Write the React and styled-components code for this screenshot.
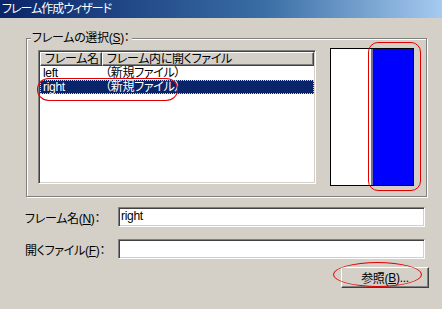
import React from "react"
import styled, { createGlobalStyle } from "styled-components"

const GlobalStyle = createGlobalStyle`
  html, body { margin: 0; padding: 0; background: #d4d0c8; }
  body { font-family: "Noto Sans CJK JP", "DejaVu Sans", sans-serif; }
`

const font = `"Liberation Sans", "Noto Sans CJK JP", sans-serif`

const Window = styled.div`
  position: relative;
  width: 442px;
  height: 309px;
  background: #d4d0c8;
  overflow: hidden;
  font-family: ${font};
  font-size: 12px;
  font-feature-settings: "palt" 1;
  letter-spacing: -0.3px;
  color: #000;
`

const TitleBar = styled.div`
  height: 18px;
  display: flex;
  align-items: center;
  padding-left: 2px;
  background: linear-gradient(to right, #0a246a 0%, #3a6ea5 60%, #a6caf0 100%);
  color: #fff;
  font-size: 12px;
  letter-spacing: -1px;
  line-height: 18px;
`

const Body = styled.div`
  display: flex;
  flex-direction: column;
  padding: 20px 15px 0 25px;
`

const GroupBox = styled.div`
  margin-left: 1px;
  width: 401px;
  height: 159px;
  box-sizing: border-box;
  border: 1px solid #808080;
  box-shadow: inset 1px 1px 0 #fff, 1px 1px 0 #fff;
  display: flex;
  flex-direction: column;
`

const Legend = styled.div`
  align-self: flex-start;
  margin: -9px 0 0 4px;
  padding: 0 2px 0 1px;
  background: #d4d0c8;
  line-height: 16px;
  height: 16px;
`

const GroupInner = styled.div`
  display: flex;
  align-items: flex-start;
  padding: 0 0 0 11px;
  margin-top: 3px;
`

const ListView = styled.div`
  width: 278px;
  height: 134px;
  margin-top: 1px;
  box-sizing: border-box;
  background: #fff;
  border: 1px solid;
  border-color: #808080 #fff #fff #808080;
  box-shadow: inset 1px 1px 0 #404040, inset -1px -1px 0 #d4d0c8;
  padding: 1px;
  display: flex;
  flex-direction: column;
`

const HeaderRow = styled.div`
  display: flex;
  height: 14px;
`

const HeaderCell = styled.div`
  width: ${p => p.w};
  flex: ${p => (p.grow ? 1 : "none")};
  box-sizing: border-box;
  background: #d4d0c8;
  border: 1px solid;
  border-color: #fff #404040 #404040 #fff;
  box-shadow: inset -1px -1px 0 #808080;
  padding-left: 4px;
  line-height: 12px;
  white-space: nowrap;
  overflow: hidden;
`

const Row = styled.div`
  display: flex;
  height: 14px;
  line-height: 14px;
  background: ${p => (p.selected ? "#0a246a" : "transparent")};
  color: ${p => (p.selected ? "#fff" : "#000")};
  outline: ${p => (p.selected ? "1px dotted #d4d0c8" : "none")};
  outline-offset: -1px;
`

const Cell = styled.div`
  width: ${p => p.w};
  padding-left: 3px;
  box-sizing: border-box;
  white-space: nowrap;
`

const Preview = styled.div`
  display: flex;
  width: 84px;
  height: 138px;
  margin-left: 14px;
  margin-top: -1px;
  box-sizing: border-box;
  border: 1px solid #000;
`

const Pane = styled.div`
  flex: 1;
  background: ${p => p.color};
  border-left: ${p => (p.divider ? "2px solid #6f6f9a" : "none")};
`

const FieldRow = styled.div`
  display: flex;
  align-items: center;
  margin-top: ${p => p.mt}px;
`

const Label = styled.div`
  width: 93px;
  white-space: nowrap;
`

const Key = styled.span`
  text-decoration: underline;
`

const TextBox = styled.div`
  width: 307px;
  height: 20px;
  box-sizing: border-box;
  background: #fff;
  border: 1px solid;
  border-color: #808080 #fff #fff #808080;
  box-shadow: inset 1px 1px 0 #404040, inset -1px -1px 0 #d4d0c8;
  padding: 0 2px;
  line-height: 17px;
`

const ButtonRow = styled.div`
  display: flex;
  justify-content: flex-end;
  margin-top: 8px;
`

const Button = styled.div`
  width: 88px;
  height: 21px;
  box-sizing: border-box;
  background: #d4d0c8;
  border: 1px solid;
  border-color: #fff #404040 #404040 #fff;
  box-shadow: inset -1px -1px 0 #808080;
  display: flex;
  align-items: center;
  justify-content: center;
  margin-right: -2px;
`

const Mark = styled.div`
  position: absolute;
  left: ${p => p.x}px;
  top: ${p => p.y}px;
  width: ${p => p.w}px;
  height: ${p => p.h}px;
  border: 1px solid #e00000;
  border-radius: ${p => p.r};
  box-sizing: border-box;
  pointer-events: none;
`

export default function App() {
  return (
    <Window>
      <GlobalStyle />
      <TitleBar>フレーム作成ウィザード</TitleBar>
      <Body>
        <GroupBox>
          <Legend>
            フレームの選択(<Key>S</Key>)：
          </Legend>
          <GroupInner>
            <ListView>
              <HeaderRow>
                <HeaderCell w="62px">フレーム名</HeaderCell>
                <HeaderCell grow>フレーム内に開くファイル</HeaderCell>
              </HeaderRow>
              <Row>
                <Cell w="62px">left</Cell>
                <Cell>（新規ファイル）</Cell>
              </Row>
              <Row selected>
                <Cell w="62px">right</Cell>
                <Cell>（新規ファイル）</Cell>
              </Row>
            </ListView>
            <Preview>
              <Pane color="#fff" />
              <Pane color="#0000ff" divider />
            </Preview>
          </GroupInner>
        </GroupBox>
        <FieldRow mt={10}>
          <Label>
            フレーム名(<Key>N</Key>)：
          </Label>
          <TextBox>right</TextBox>
        </FieldRow>
        <FieldRow mt={12}>
          <Label>
            開くファイル(<Key>F</Key>)：
          </Label>
          <TextBox />
        </FieldRow>
        <ButtonRow>
          <Button>
            参照(<Key>B</Key>)...
          </Button>
        </ButtonRow>
      </Body>
      <Mark x={37} y={78} w={141} h={23} r="12px / 11px" />
      <Mark x={368} y={42} w={53} h={149} r="10px" />
      <Mark x={333} y={262} w={89} h={25} r="50%" />
    </Window>
  )
}
